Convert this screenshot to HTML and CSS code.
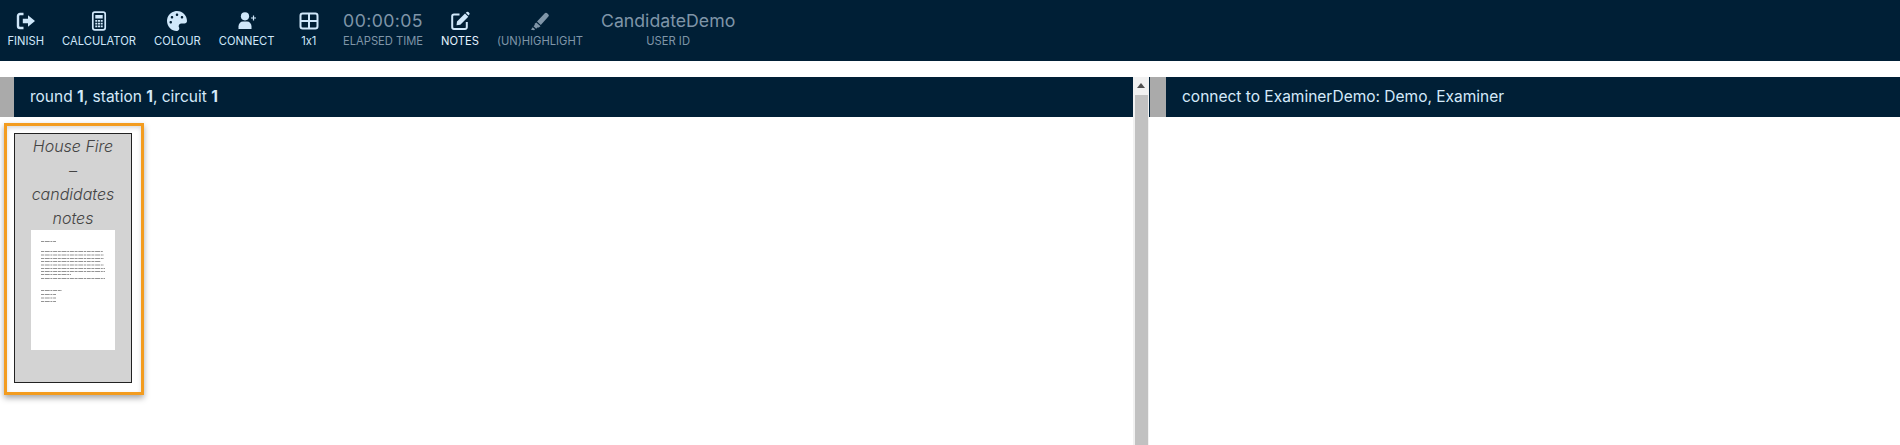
FILE: index.html
```html
<!DOCTYPE html>
<html lang="en">
<head>
    <meta charset="UTF-8">
    <meta name="viewport" content="width=device-width, initial-scale=1.0">
    <title>Candidate Station</title>
    <link rel="stylesheet" href="styles.css">
</head>
<body>
    <!-- Top toolbar -->
    <nav class="toolbar">
        <div class="tool">
            <svg class="icon" viewBox="0 0 20 20"><path d="M7.500 3H4a2 2 0 0 0-2 2v10a2 2 0 0 0 2 2h3.500" fill="none" stroke="currentColor" stroke-width="2.400"/><path d="M12 4.200l7 5.800-7 5.800v-3.600H6.800V7.800H12z" fill="currentColor"/></svg>
            <span class="label">FINISH</span>
        </div>
        <div class="tool">
            <svg class="icon" viewBox="0 0 20 20"><rect x="3.800" y="1.200" width="12.400" height="17.600" rx="2" fill="none" stroke="currentColor" stroke-width="1.700"/><path d="M6.300 4h7.400v3.400H6.300zM6.300 9h2v1.800h-2zM9 9h2v1.800H9zM11.700 9h2v1.800h-2zM6.300 11.800h2v1.800h-2zM9 11.800h2v1.800H9zM11.700 11.800h2v1.800h-2zM6.300 14.500h2v1.800h-2zM9 14.500h2v1.800H9zM11.700 14.500h2v1.800h-2z" fill="currentColor"/></svg>
            <span class="label">CALCULATOR</span>
        </div>
        <div class="tool">
            <svg class="icon" viewBox="0 0 512 512"><path fill="currentColor" d="M204.300 5C104.900 24.400 24.800 104.300 5.200 203.400c-37 187 131.700 326.400 258.800 306.700 41.200-6.400 61.400-54.600 42.500-91.700-23.100-45.400 9.900-98.400 60.900-98.400h79.700c35.800 0 64.800-29.600 64.900-65.300C511.500 97.100 368.100-26.900 204.300 5zM96 320c-17.700 0-32-14.300-32-32s14.300-32 32-32 32 14.300 32 32-14.300 32-32 32zm32-128c-17.700 0-32-14.300-32-32s14.300-32 32-32 32 14.300 32 32-14.300 32-32 32zm128-64c-17.700 0-32-14.300-32-32s14.300-32 32-32 32 14.300 32 32-14.300 32-32 32zm128 64c-17.700 0-32-14.300-32-32s14.300-32 32-32 32 14.300 32 32-14.300 32-32 32z"/></svg>
            <span class="label">COLOUR</span>
        </div>
        <div class="tool">
            <svg class="icon" viewBox="0 0 20 20"><circle cx="8" cy="5.300" r="4.100" fill="currentColor"/><path d="M1.500 18v-2.500c0-3 2-5 4.500-5h4c2.500 0 4.500 2 4.500 5V18z" fill="currentColor"/><path d="M16.500 4.500v5M14 7h5" fill="none" stroke="currentColor" stroke-width="1.200"/></svg>
            <span class="label">CONNECT</span>
        </div>
        <div class="tool tool-layout">
            <svg class="icon" viewBox="0 0 20 20"><rect x="1.500" y="2.500" width="17" height="15" rx="2.200" fill="none" stroke="currentColor" stroke-width="2"/><path d="M10 2.500v15M1.500 10h17" fill="none" stroke="currentColor" stroke-width="2"/></svg>
            <span class="label">1x1</span>
        </div>
        <div class="tool muted">
            <span class="value value-time">00:00:05</span>
            <span class="label">ELAPSED TIME</span>
        </div>
        <div class="tool">
            <svg class="icon" viewBox="0 0 20 20"><path d="M9.500 3.500H4a1.800 1.800 0 0 0-1.800 1.800v11A1.800 1.800 0 0 0 4 18h11a1.800 1.800 0 0 0 1.800-1.800v-5.300" fill="none" stroke="currentColor" stroke-width="2"/><path d="M7 10.500l8-8 3.300 3.300-8 8-3.800.5zM15.800 1.700l.9-.7a1.300 1.300 0 0 1 1.700 0l.9.900a1.300 1.300 0 0 1 0 1.700l-.8.900z" fill="currentColor"/></svg>
            <span class="label label-bright">NOTES</span>
        </div>
        <div class="tool muted">
            <svg class="icon" viewBox="0 0 20 20"><path d="M7 10.500L14.800 2.200a1.500 1.500 0 0 1 2.100-.1l1.500 1.400a1.500 1.500 0 0 1 0 2.100l-7.600 8.300zM6.300 11.500l4.200 3.700-1.800 1.400-1.300-.1-1.200 1.300-2.700-2.500 1.200-1.300v-1.200zM2.700 16.200l2.300 2.100-.8.900-3.200-.4z" fill="currentColor"/></svg>
            <span class="label">(UN)HIGHLIGHT</span>
        </div>
        <div class="tool muted">
            <span class="value">CandidateDemo</span>
            <span class="label">USER ID</span>
        </div>
    </nav>

    <main class="panels">
        <!-- Documents panel -->
        <section class="panel panel-left">
            <h2 class="panel-head">
                <span class="panel-tab"></span>
                <span class="panel-title">round <b>1</b>, station <b>1</b>, circuit <b>1</b></span>
            </h2>
            <div class="doc-list">
                <div class="doc-card">
                    <div class="doc-inner">
                        <div class="doc-title">House Fire – candidates notes</div>
                        <svg class="doc-thumb" viewBox="0 0 84 120">
                            <g stroke="#666" stroke-width="0.700" stroke-dasharray="3 .7 5 .7 2 .7 4 .7">
                                <path d="M10 11.500h15"/>
                                <path d="M10 21.500h62"/>
                                <path d="M10 25h63"/>
                                <path d="M10 28.500h63"/>
                                <path d="M10 31.500h60"/>
                                <path d="M10 35h63"/>
                                <path d="M10 38.500h64"/>
                                <path d="M10 41.500h64"/>
                                <path d="M10 44.500h30"/>
                                <path d="M10 48.500h64"/>
                                <path d="M10 60.500h21"/>
                                <path d="M10 64.500h15"/>
                                <path d="M10 68h15"/>
                                <path d="M10 71.500h15"/>
                            </g>
                        </svg>
                    </div>
                </div>
            </div>
        </section>

        <!-- Scrollbar of the left panel -->
        <div class="scrollbar">
            <span class="scroll-arrow"></span>
            <span class="scroll-thumb"></span>
        </div>

        <!-- Connection panel -->
        <section class="panel panel-right">
            <h2 class="panel-head">
                <span class="panel-tab"></span>
                <span class="panel-title">connect to ExaminerDemo: Demo, Examiner</span>
            </h2>
        </section>
    </main>
</body>
</html>
```
FILE: styles.css
```css
body {
    margin: 0;
    height: 445px;
    overflow: hidden;
    background-color: white;
    font-family: 'Inter', 'Liberation Sans', sans-serif;
    font-variant-ligatures: none;
    font-feature-settings: "calt" 0;
}
.toolbar {
    display: flex;
    gap: 18px;
    height: 61px;
    padding-left: 7.5px;
    background-color: #001f36; /* Deep navy */
    color: #cfe7fa;
}
.tool {
    display: flex;
    flex-direction: column;
    align-items: center;
    padding-top: 11px;
}
.tool-layout {
    min-width: 32.5px;
}
.muted {
    color: #7f95a8;
}
.icon {
    width: 20px;
    height: 20px;
    margin-bottom: 3px;
}
.value {
    height: 23px;
    font-size: 17.7px;
    line-height: 20px;
    white-space: nowrap;
}
.value-time {
    letter-spacing: 0.4px;
}
.label {
    font-size: 11.2px;
    line-height: 14px;
    white-space: nowrap;
}
.label-bright {
    color: #e4f3ff;
}
.panels {
    display: flex;
    margin-top: 16px;
    height: 368px;
}
.panel-left {
    width: 1133px;
}
.panel-right {
    flex: 1;
}
.panel-head {
    display: flex;
    height: 40px;
    margin: 0;
    background-color: #001f36;
    color: #d5eafa;
    font-size: 15.500px;
    font-weight: 400;
    line-height: 40px;
}
.panel-head b {
    font-weight: 700;
}
.panel-tab {
    width: 14px;
    background-color: #aaa;
}
.panel-title {
    padding-left: 16px;
}
.doc-list {
    padding: 6px 4px;
}
.doc-card {
    box-sizing: border-box;
    width: 140px;
    height: 272px;
    padding: 7px 9px 7px 7px;
    border: 3px solid #f39c1f; /* Orange selection */
    box-shadow: 0 3px 6px rgba(0, 0, 0, 0.35), inset 0 2px 4px rgba(0, 0, 0, 0.15);
}
.doc-inner {
    box-sizing: border-box;
    display: flex;
    flex-direction: column;
    align-items: center;
    height: 250px;
    border: 1px solid #222;
    background-color: #d3d3d3;
}
.doc-title {
    width: 90px;
    color: #444;
    font-size: 16px;
    font-style: italic;
    font-weight: 300;
    line-height: 24px;
    text-align: center;
}
.doc-thumb {
    width: 84px;
    height: 120px;
    background-color: white;
}
.scrollbar {
    display: flex;
    flex-direction: column;
    align-items: center;
    width: 16px;
    background-color: #f1f1f1;
}
.scroll-arrow {
    width: 0;
    height: 0;
    margin: 6px 0 7px;
    border-left: 4px solid transparent;
    border-right: 4px solid transparent;
    border-bottom: 5px solid #505050;
}
.scroll-thumb {
    flex: 1;
    width: 13px;
    background-color: #c1c1c1;
}
.panel-right .panel-tab {
    width: 16px;
    margin-left: 1px;
}
```
